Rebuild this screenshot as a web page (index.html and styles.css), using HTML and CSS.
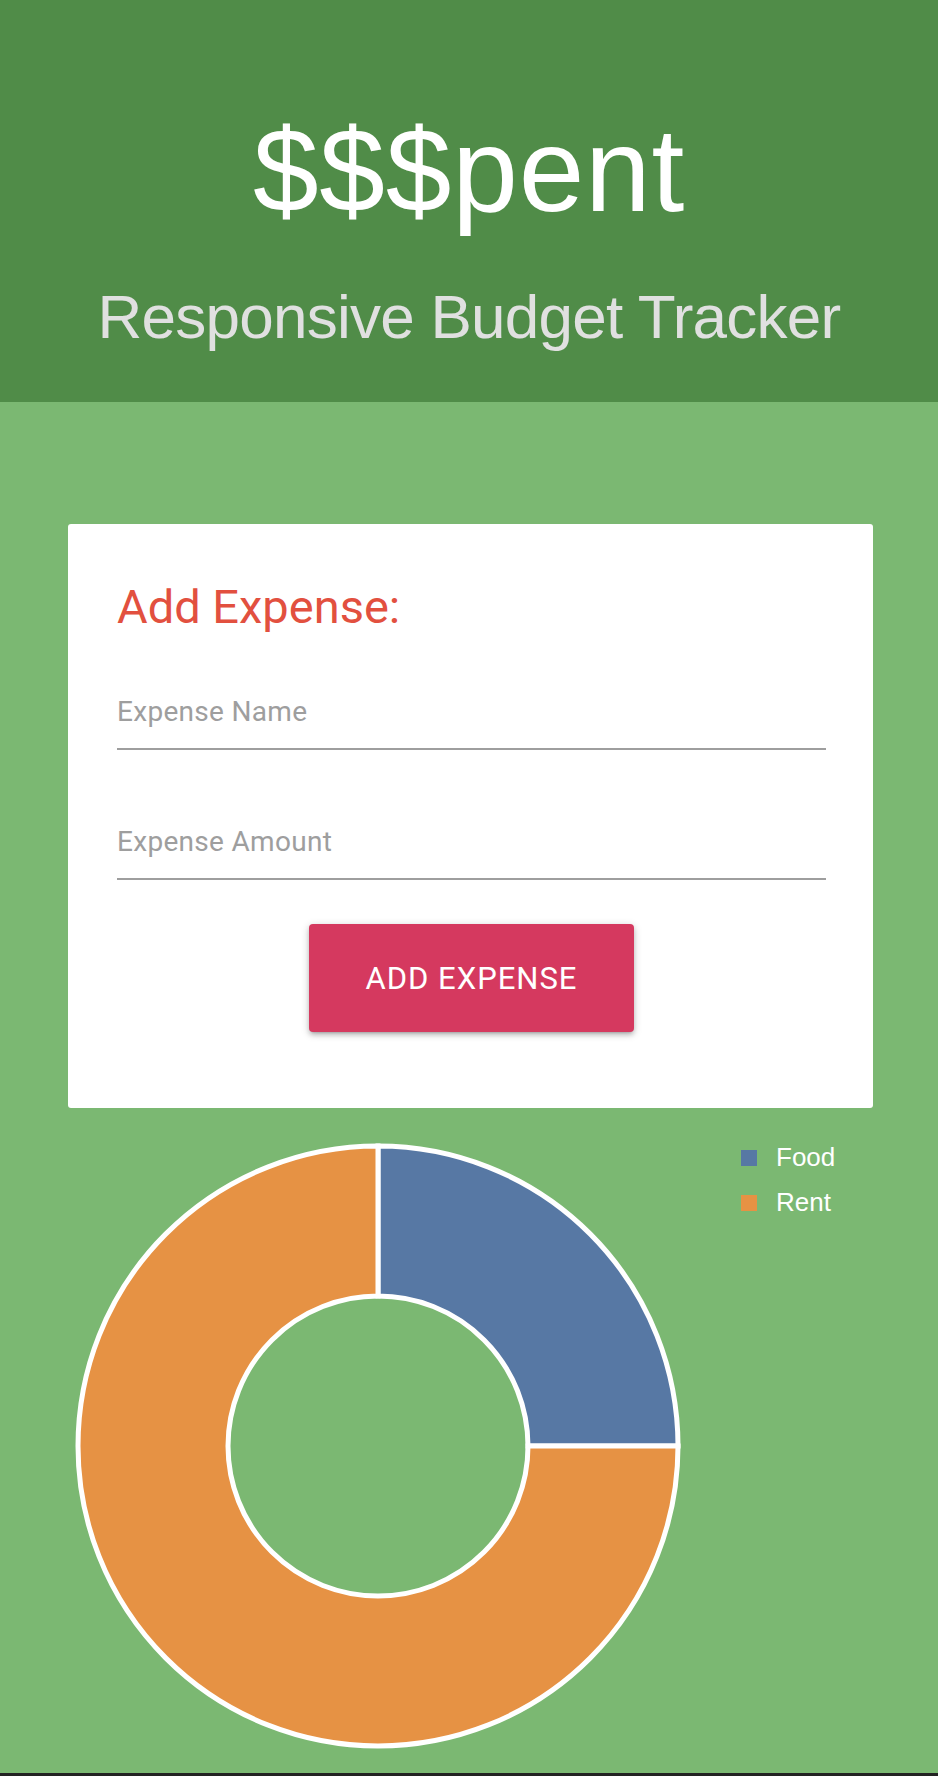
FILE: index.html
```html
<!DOCTYPE html>
<html lang="en">
<head>
<meta charset="utf-8">
<title>$$$pent</title>
<link rel="stylesheet" href="styles.css">
</head>
<body>
<header class="hero">
  <h1 class="hero-title">$$$pent</h1>
  <h2 class="hero-subtitle">Responsive Budget Tracker</h2>
</header>
<main class="content">
  <section class="card">
    <h3 class="card-title">Add Expense:</h3>
    <input class="field field-first" type="text" placeholder="Expense Name">
    <input class="field field-second" type="text" placeholder="Expense Amount">
    <div class="actions">
      <button class="btn" type="button">ADD EXPENSE</button>
    </div>
  </section>
  <section class="chart">
    <svg class="donut" width="620" height="620" viewBox="0 0 620 620">
      <path d="M 310 10 A 300 300 0 0 1 610 310 L 460 310 A 150 150 0 0 0 310 160 Z" fill="#5778a4" stroke="#ffffff" stroke-width="5"/>
      <path d="M 610 310 A 300 300 0 1 1 310 10 L 310 160 A 150 150 0 1 0 460 310 Z" fill="#e69244" stroke="#ffffff" stroke-width="5"/>
    </svg>
    <ul class="legend">
      <li class="legend-item"><span class="swatch swatch-food"></span>Food</li>
      <li class="legend-item"><span class="swatch swatch-rent"></span>Rent</li>
    </ul>
  </section>
</main>
<footer class="bottom-bar"></footer>
</body>
</html>
```
FILE: styles.css
```css
html, body {
  margin: 0;
  padding: 0;
}
body {
  background: #7bb872;
  min-height: 100vh;
  display: flex;
  flex-direction: column;
  font-family: Roboto, "Liberation Sans", sans-serif;
}
.hero {
  background: #508c48;
  height: 402px;
  box-sizing: border-box;
  padding-top: 111px;
  text-align: center;
}
.hero-title {
  margin: 0;
  font-family: "Liberation Sans", Arial, sans-serif;
  font-weight: 400;
  font-size: 118px;
  line-height: 118px;
  letter-spacing: 0.8px;
  color: #ffffff;
}
.hero-subtitle {
  margin: 57px 0 0;
  font-family: "Liberation Sans", Arial, sans-serif;
  font-weight: 400;
  font-size: 62px;
  line-height: 61px;
  letter-spacing: -0.75px;
  color: #e0e0e0;
}
.content {
  margin-left: 68px;
  width: 805px;
  padding-top: 122px;
}
.card {
  background: #ffffff;
  border-radius: 3px;
  padding: 59px 47px 76px 49px;
  display: flex;
  flex-direction: column;
}
.card-title {
  margin: 0;
  font-family: Roboto, sans-serif;
  font-weight: 400;
  font-size: 47px;
  line-height: 47px;
  color: #e2503f;
}
.field {
  display: block;
  width: 100%;
  box-sizing: content-box;
  height: 74px;
  padding: 0;
  border: none;
  border-bottom: 2px solid #9e9e9e;
  outline: none;
  background: transparent;
  font-family: Roboto, sans-serif;
  font-size: 28px;
  letter-spacing: 0.3px;
  color: #333;
}
.field::placeholder {
  color: #9e9e9e;
}
.field-first {
  margin-top: 44px;
}
.field-second {
  margin-top: 54px;
}
.actions {
  display: flex;
  justify-content: center;
  margin-top: 44px;
}
.btn {
  width: 325px;
  height: 108px;
  border: none;
  border-radius: 4px;
  background: #d5395f;
  color: #ffffff;
  font-family: Roboto, sans-serif;
  font-size: 31px;
  letter-spacing: 1px;
  box-shadow: 0 3px 4px 0 rgba(0,0,0,0.14), 0 4px 2px -3px rgba(0,0,0,0.12), 0 2px 8px 0 rgba(0,0,0,0.2);
  cursor: pointer;
}
.chart {
  display: flex;
  align-items: flex-start;
  margin-top: 28px;
}
.donut {
  display: block;
  flex: none;
}
.legend {
  list-style: none;
  margin: -1px 0 0 53px;
  padding: 0;
}
.legend-item {
  display: flex;
  align-items: center;
  height: 45px;
  font-family: "Liberation Sans", Arial, sans-serif;
  font-size: 26px;
  line-height: 45px;
  color: #ffffff;
}
.swatch {
  width: 16px;
  height: 16px;
  margin-right: 19px;
  flex: none;
}
.swatch-food {
  background: #5778a4;
}
.swatch-rent {
  background: #e69244;
}
.bottom-bar {
  margin-top: auto;
  height: 3px;
  background: #222222;
}
```
